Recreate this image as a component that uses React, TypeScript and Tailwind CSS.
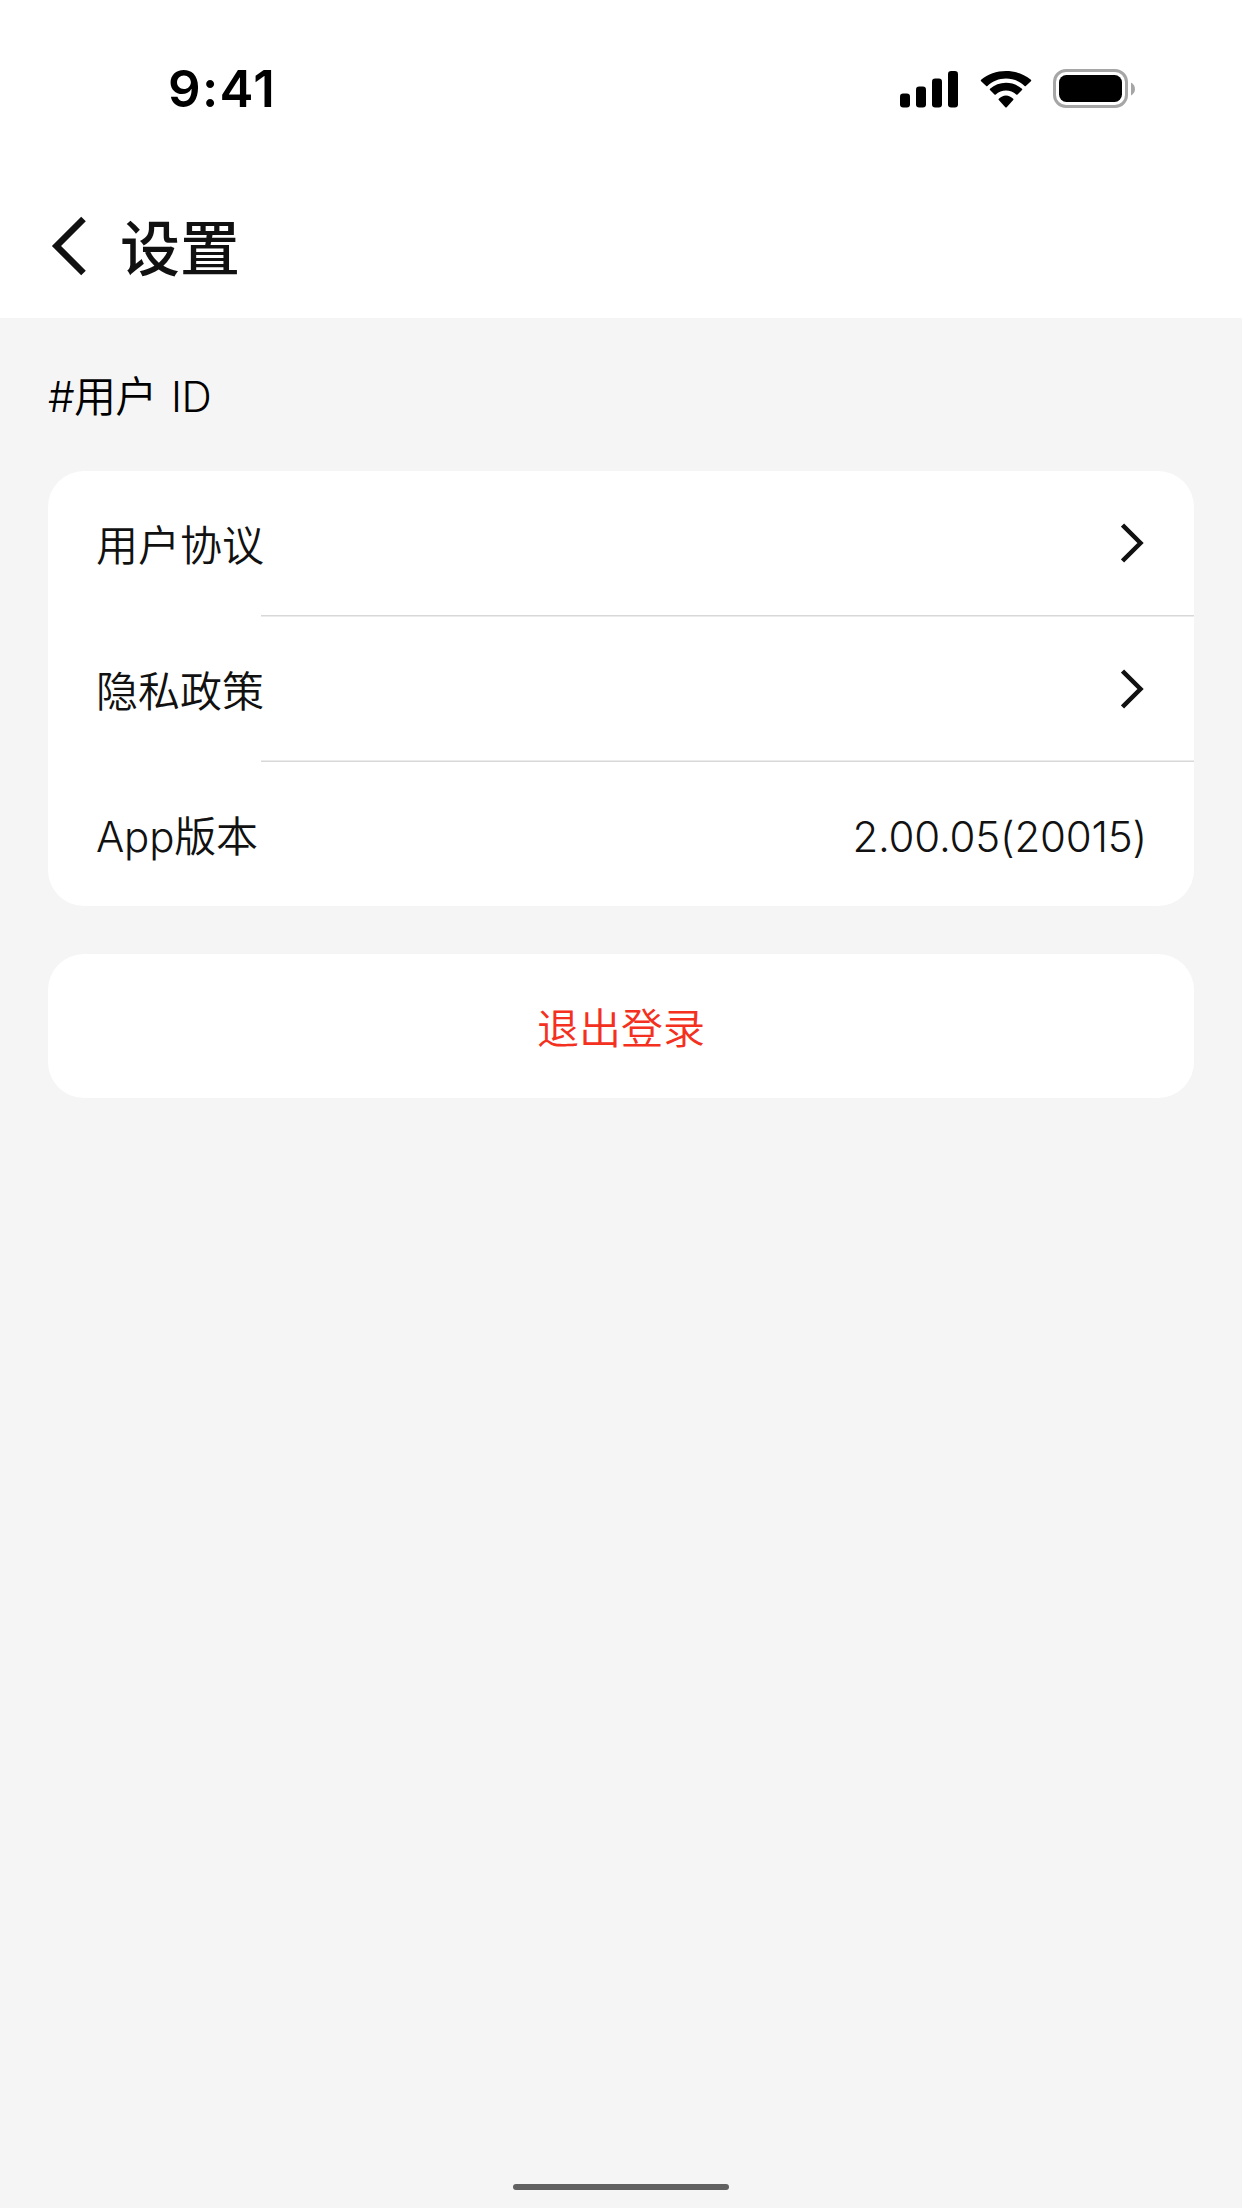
interface SettingItem {
  title: string;
  value?: string;
  rowStyle: string;
  lineStyle?: string;
}

const items: SettingItem[] = [
  {
    title: "用户协议",
    rowStyle: "h-36",
    lineStyle: "border-t-[#d8d8d8] border-b-[#ebebeb]",
  },
  {
    title: "隐私政策",
    rowStyle: "h-[143px]",
    lineStyle: "border-t-[#ebebeb] border-b-[#d8d8d8]",
  },
  {
    title: "App版本",
    value: "2.00.05(20015)",
    rowStyle: "h-36 tracking-[-0.2px]",
  },
];

const StatusBar = () => {
  return (
    <div className="flex h-[177px] items-center justify-between pl-[168px] pr-[107px]">
      <span className="text-[51px] font-semibold leading-none tracking-[1.3px] text-black">
        9:41
      </span>
      <div className="flex items-center">
        <svg width="58" height="38" viewBox="0 0 58 38" fill="#000">
          <rect x="0" y="23.5" width="10" height="14" rx="3.2" />
          <rect x="16" y="16.5" width="10" height="21" rx="3.2" />
          <rect x="32" y="8.5" width="10" height="29" rx="3.2" />
          <rect x="48" y="1" width="10" height="36.5" rx="3.2" />
        </svg>
        <svg
          className="ml-[22px]"
          width="52"
          height="38"
          viewBox="0 0 52 38"
          fill="#000"
        >
          <path d="M26 8.5C33 8.5 39.5 11.2 44.6 16Q45.2 16.6 45.8 16L50.9 11.2Q51.6 10.5 50.9 9.8C44 4.2 35.5 1 26 1S8 4.2 1.1 9.8Q.4 10.5 1.1 11.2L6.2 16Q6.8 16.6 7.4 16C12.5 11.2 19 8.5 26 8.5Z" />
          <path d="M26 20.5C29.8 20.5 33.4 21.9 36.2 24.5Q36.9 25.1 37.5 24.5L42 20Q42.6 19.3 42 18.7C37.6 15 32 12.8 26 12.8S14.4 15 10 18.7Q9.4 19.3 10 20L14.5 24.5Q15.1 25.1 15.8 24.5C18.6 21.9 22.2 20.5 26 20.5Z" />
          <path d="M33.2 28.8Q33.9 29.4 33.2 30.1L26.7 37.2Q26 37.9 25.3 37.2L18.8 30.1Q18.1 29.4 18.8 28.8C20.8 26.9 23.3 25.6 26 25.6S31.2 26.9 33.2 28.8Z" />
        </svg>
        <svg
          className="ml-[21px]"
          width="82"
          height="39"
          viewBox="0 0 82 39"
          fill="none"
        >
          <rect
            x="1.5"
            y="1.5"
            width="72"
            height="36"
            rx="11.5"
            stroke="#a6a6a6"
            strokeWidth="3"
          />
          <rect x="6" y="6" width="63" height="27" rx="7.5" fill="#000" />
          <path d="M78 13.5V26.5C83.3 24 83.3 16 78 13.5Z" fill="#a6a6a6" />
        </svg>
      </div>
    </div>
  );
};

const Header = () => {
  return (
    <div className="flex h-[141px] items-center pb-[3px] pl-[51px]">
      <svg width="36" height="60" viewBox="0 0 36 60" fill="none">
        <path d="M32.5 3L5.5 30L32.5 57" stroke="#111" strokeWidth="6.5" />
      </svg>
      <h1 className="ml-[33px] pt-[5px] text-[60px] font-medium leading-none text-[#111]">
        设置
      </h1>
    </div>
  );
};

const SettingRow = ({ item }: { item: SettingItem }) => {
  return (
    <div>
      <div
        className={`flex items-center justify-between pl-12 pr-[47px] ${item.rowStyle}`}
      >
        <span className="pt-1.5">{item.title}</span>
        {item.value ? (
          <span className="pt-[5px]">{item.value}</span>
        ) : (
          <svg
            className="mr-0.5"
            width="24"
            height="42"
            viewBox="0 0 24 42"
            fill="none"
          >
            <path d="M1.5 3L19.5 21L1.5 39" stroke="#111" strokeWidth="4.5" />
          </svg>
        )}
      </div>
      {item.lineStyle && (
        <div className={`ml-[213px] h-0.5 border-y ${item.lineStyle}`} />
      )}
    </div>
  );
};

const App = () => {
  return (
    <div className="flex h-[2208px] w-[1242px] flex-col bg-[#f5f5f5] font-[Inter,'Noto_Sans_CJK_SC',sans-serif] text-[42px] leading-none text-[#111]">
      <div className="h-[318px] bg-white">
        <StatusBar />
        <Header />
      </div>
      <div className="flex flex-1 flex-col px-12 pb-[18px] font-[350]">
        <div className="flex h-[153px] items-center pt-1 tracking-[-0.7px] text-black [word-spacing:3.5px]">
          #用户 ID
        </div>
        <div className="h-[435px] overflow-hidden rounded-[36px] bg-white">
          {items.map((item) => (
            <SettingRow key={item.title} item={item} />
          ))}
        </div>
        <button className="mt-12 h-36 rounded-[36px] bg-white pt-[5px] text-[#f43020]">
          退出登录
        </button>
        <div className="mx-auto mt-auto h-1.5 w-[216px] rounded-full bg-[#616161]" />
      </div>
    </div>
  );
};

export default App;
